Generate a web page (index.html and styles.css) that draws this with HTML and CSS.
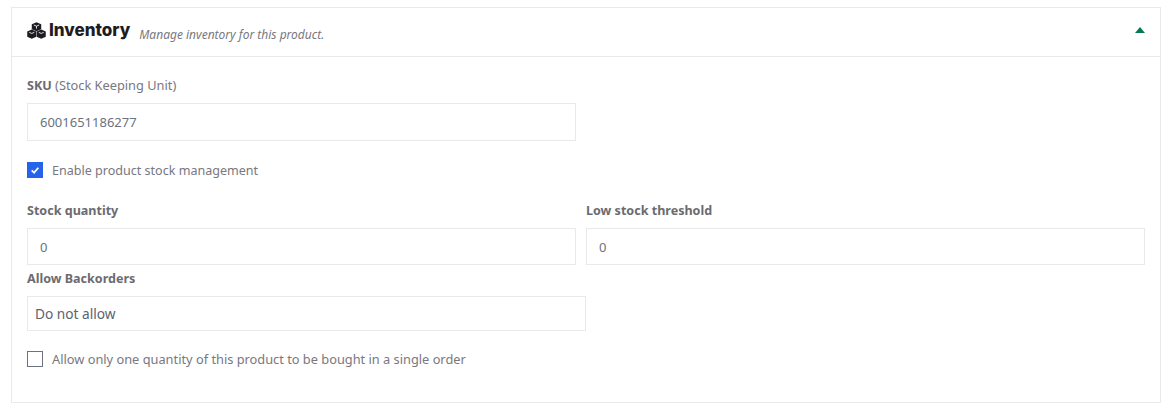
FILE: index.html
```html
<!DOCTYPE html>
<html lang="en">
<head>
<meta charset="utf-8">
<title>Inventory</title>
<link rel="stylesheet" href="styles.css">
</head>
<body>
<section class="card">
  <header class="card-head">
    <div class="title-group">
      <svg class="cubes" viewBox="0 0 20 18" aria-hidden="true">
        <path d="M10 0.2 L15 2.3 V7.6 L10 9.8 L5 7.6 V2.3 Z" fill="#1c1c22"/>
        <path d="M5 8 L9.8 10 V15.5 L5 17.8 L0.2 15.5 V10 Z" fill="#1c1c22"/>
        <path d="M15 8 L19.8 10 V15.5 L15 17.8 L10.2 15.5 V10 Z" fill="#1c1c22"/>
        <path d="M7.2 3.2 L10 4.4 L12.8 3.2 M10 4.4 V7 M2.4 11 L5 12.1 L7.6 11 M12.4 11 L15 12.1 L17.6 11" fill="none" stroke="#fff" stroke-width="0.9"/>
      </svg>
      <h2 class="title">Inventory</h2>
      <span class="subtitle">Manage inventory for this product.</span>
    </div>
    <span class="caret" aria-hidden="true"></span>
  </header>
  <div class="card-body">
    <div class="half sku">
      <label class="label"><b>SKU</b> (Stock Keeping Unit)</label>
      <input class="field" type="text" value="6001651186277">
    </div>
    <label class="check-row enable">
      <span class="box checked">
        <svg viewBox="0 0 16 16" aria-hidden="true"><path d="M4.2 8.3 L7 11 L11.8 5.4" fill="none" stroke="#fff" stroke-width="2"/></svg>
      </span>
      Enable product stock management
    </label>
    <div class="grid">
      <div class="half">
        <label class="label"><b>Stock quantity</b></label>
        <input class="field" type="text" value="0">
      </div>
      <div>
        <label class="label"><b>Low stock threshold</b></label>
        <input class="field" type="text" value="0">
      </div>
    </div>
    <div class="backorders">
      <label class="label"><b>Allow Backorders</b></label>
      <select class="select"><option>Do not allow</option></select>
    </div>
    <label class="check-row single">
      <span class="box"></span>
      Allow only one quantity of this product to be bought in a single order
    </label>
  </div>
</section>
</body>
</html>
```
FILE: styles.css
```css
* { box-sizing: border-box; }
html, body { margin: 0; background: #fff; }
body {
  padding: 7px 15px 8px 11px;
  font-family: "Noto Sans", "Open Sans", sans-serif;
  font-size: 12.8px;
  color: #6b7280;
}
.card { border: 1px solid #e9e9e9; height: 396px; }
.card-head {
  height: 49px;
  border-bottom: 1px solid #e9e9e9;
  display: flex;
  align-items: center;
  justify-content: space-between;
  padding: 0 15px;
}
.title-group { display: flex; align-items: center; }
.cubes { width: 19px; height: 17px; margin-right: 3px; margin-top: -4px; }
.title {
  margin: -5px 0 0;
  font-family: Inter, sans-serif;
  font-weight: 800;
  font-size: 17px;
  color: #1c1c22;
}
.subtitle {
  margin-left: 9px;
  margin-top: 5px;
  font-style: italic;
  font-size: 12px;
  color: #78787f;
}
.caret {
  width: 0; height: 0;
  margin-top: -4px;
  border-left: 5px solid transparent;
  border-right: 5px solid transparent;
  border-bottom: 6px solid #057a55;
}
.card-body { padding: 19px 15px 0; }
.half { padding-right: 10px; }
.sku { width: 559px; }
.label { display: block; height: 27px; line-height: 19px; color: #78787f; }
.label b { font-weight: 700; font-size: 12.55px; color: #6b6b70; }
.field {
  display: block;
  width: 100%;
  height: 38px;
  border: 1px solid #e9e9e9;
  padding: 0 12px;
  font: inherit;
  font-size: 13px;
  color: #6b7280;
  background: #fff;
  outline: none;
}
.check-row {
  display: flex;
  align-items: center;
  gap: 9px;
  color: #78787f;
}
.enable { margin-top: 20px; margin-bottom: -1px; height: 18px; font-size: 12.55px; }
.box {
  width: 16px; height: 16px;
  border: 1px solid #6b7280;
  flex: none;
  display: block;
}
.box.checked { background: #2563eb; border-color: #2563eb; }
.box svg { display: block; width: 14px; height: 14px; }
.grid { display: grid; grid-template-columns: 559px 559px; margin-top: 23px; }
.grid .field { height: 37px; }
.backorders { width: 559px; margin-top: 4px; }
.select {
  display: block;
  width: 100%;
  height: 35px;
  border: 1px solid #e9e9e9;
  padding: 0 7px;
  font: inherit;
  font-size: 13.7px;
  color: #5b6370;
  background: #fff;
  appearance: none;
  outline: none;
  border-radius: 0;
}
.single { margin-top: 19px; height: 18px; }
```
